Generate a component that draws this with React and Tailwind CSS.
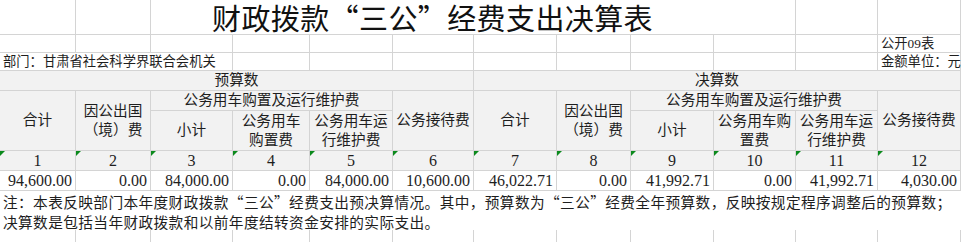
import React from 'react';

const line = 'border-[#d4d4d4]';

const Tri = () => (
  <span className="absolute top-0 left-0 w-0 h-0 border-t-[5px] border-r-[5px] border-t-[#0b8a1c] border-r-transparent" />
);

const H = ({ children, className = '' }) => (
  <div className={`flex items-center justify-center text-center bg-[#f2f2f2] border-r border-b ${line} text-[14.67px] leading-[19px] ${className}`}>
    {children}
  </div>
);

const budget = ['94,600.00', '0.00', '84,000.00', '0.00', '84,000.00', '10,600.00'];
const finals = ['46,022.71', '0.00', '41,992.71', '0.00', '41,992.71', '4,030.00'];

const HeaderGroup = () => (
  <>
    <H className="row-span-2">合计</H>
    <H className="row-span-2">因公出国<br />（境）费</H>
    <H className="col-span-3">公务用车购置及运行维护费</H>
    <H className="row-span-2">公务接待费</H>
  </>
);

const App = () => {
  const blank = (n, extra = '') =>
    Array.from({ length: n }).map((_, i) => (
      <div key={i} className={`border-r border-b ${line} ${extra}`} />
    ));

  return (
    <div className="w-[962px] h-[242px] overflow-hidden bg-white text-[#1e1e1e] font-['Liberation_Serif','Noto_Sans_CJK_SC',serif]">
      <div className="grid w-[961px] grid-cols-[76px_75px_82px_77px_83px_81px_83px_74px_83px_82px_82px_83px] grid-rows-[35px_18px_18px_20px_20px_40px_20px_20px_39px_20px]">
        {/* row 1: title */}
        <div className={`border-r border-b ${line}`} />
        <div className={`border-r border-b ${line}`} />
        <div className={`col-span-7 border-b ${line} flex items-start justify-center pt-[3px]`}>
          <h1 className="font-['Noto_Sans_CJK_SC',sans-serif] text-[29px] leading-[29px] whitespace-nowrap text-[#111] tracking-[0.4px]">
            财政拨款“三公”经费支出决算表
          </h1>
        </div>
        {blank(3)}

        {/* row 2 */}
        {blank(11)}
        <div className={`border-r border-b ${line} pl-[3px] text-[13.3px] leading-[17px] whitespace-nowrap`}>公开09表</div>

        {/* row 3 */}
        <div className={`col-span-3 border-r border-b ${line} pl-[3px] text-[13.3px] leading-[17px] whitespace-nowrap`}>
          部门：甘肃省社会科学界联合会机关
        </div>
        {blank(8)}
        <div className={`border-r border-b ${line} pl-[3px] text-[13.3px] leading-[17px] whitespace-nowrap`}>金额单位：元</div>

        {/* header */}
        <H className="col-span-6">预算数</H>
        <H className="col-span-6">决算数</H>

        <HeaderGroup />
        <HeaderGroup />

        <H>小计</H>
        <H>公务用车<br />购置费</H>
        <H>公务用车运<br />行维护费</H>
        <H>小计</H>
        <H>公务用车购<br />置费</H>
        <H>公务用车运<br />行维护费</H>

        {/* column numbers */}
        {Array.from({ length: 12 }).map((_, i) => (
          <H key={i} className="relative text-[16px]">
            <Tri />
            {i + 1}
          </H>
        ))}

        {/* values */}
        {[...budget, ...finals].map((v, i) => (
          <div key={i} className={`flex items-center justify-end pr-[3px] border-r border-b ${line} text-[16px] leading-[19px]`}>
            {v}
          </div>
        ))}

        {/* note */}
        <div className="col-span-12 pl-[3px] pt-[1px] font-['Noto_Sans_CJK_SC',sans-serif] text-[14.67px] leading-[20px] tracking-[0.4px] whitespace-nowrap">
          注：本表反映部门本年度财政拨款“三公”经费支出预决算情况。其中，预算数为“三公”经费全年预算数，反映按规定程序调整后的预算数；
          <br />
          决算数是包括当年财政拨款和以前年度结转资金安排的实际支出。
        </div>

        {blank(12)}
      </div>
    </div>
  );
};

export default App;
